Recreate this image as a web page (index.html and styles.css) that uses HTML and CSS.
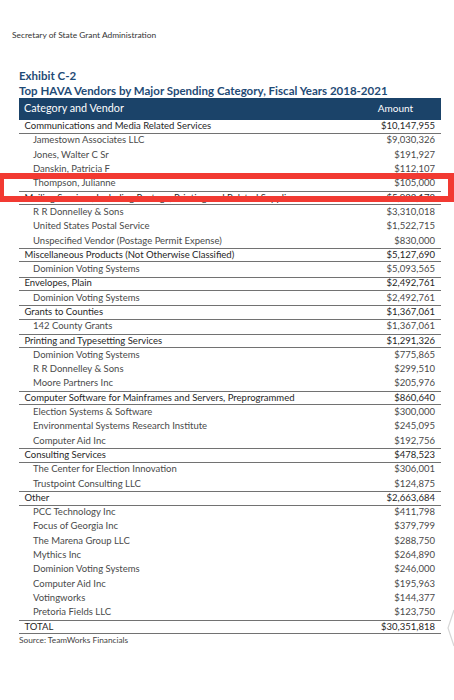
FILE: index.html
```html
<!DOCTYPE html>
<html>
<head>
<meta charset="utf-8">
<link rel="stylesheet" href="styles.css">
</head>
<body>
<div class="page">
  <div class="running-head">Secretary of State Grant Administration</div>
  <div class="exhibit">
    <div class="exhibit-no">Exhibit C-2</div>
    <div class="exhibit-title">Top HAVA Vendors by Major Spending Category, Fiscal Years 2018-2021</div>
    <div class="table">
      <div class="row head"><span class="name">Category and Vendor</span><span class="amt">Amount</span></div>
      <div class="row cat first"><span class="name">Communications and Media Related Services</span><span class="amt">$10,147,955</span></div>
      <div class="row sub"><span class="name">Jamestown Associates LLC</span><span class="amt">$9,030,326</span></div>
      <div class="row sub"><span class="name">Jones, Walter C Sr</span><span class="amt">$191,927</span></div>
      <div class="row sub"><span class="name">Danskin, Patricia F</span><span class="amt">$112,107</span></div>
      <div class="row sub"><span class="name">Thompson, Julianne</span><span class="amt">$105,000</span></div>
      <div class="row cat"><span class="name">Mailing Services, Including Postage, Printing and Related Supplies</span><span class="amt">$5,922,178</span></div>
      <div class="row sub"><span class="name">R R Donnelley &amp; Sons</span><span class="amt">$3,310,018</span></div>
      <div class="row sub"><span class="name">United States Postal Service</span><span class="amt">$1,522,715</span></div>
      <div class="row sub"><span class="name">Unspecified Vendor (Postage Permit Expense)</span><span class="amt">$830,000</span></div>
      <div class="row cat"><span class="name">Miscellaneous Products (Not Otherwise Classified)</span><span class="amt">$5,127,690</span></div>
      <div class="row sub"><span class="name">Dominion Voting Systems</span><span class="amt">$5,093,565</span></div>
      <div class="row cat"><span class="name">Envelopes, Plain</span><span class="amt">$2,492,761</span></div>
      <div class="row sub"><span class="name">Dominion Voting Systems</span><span class="amt">$2,492,761</span></div>
      <div class="row cat"><span class="name">Grants to Counties</span><span class="amt">$1,367,061</span></div>
      <div class="row sub"><span class="name">142 County Grants</span><span class="amt">$1,367,061</span></div>
      <div class="row cat"><span class="name">Printing and Typesetting Services</span><span class="amt">$1,291,326</span></div>
      <div class="row sub"><span class="name">Dominion Voting Systems</span><span class="amt">$775,865</span></div>
      <div class="row sub"><span class="name">R R Donnelley &amp; Sons</span><span class="amt">$299,510</span></div>
      <div class="row sub"><span class="name">Moore Partners Inc</span><span class="amt">$205,976</span></div>
      <div class="row cat"><span class="name">Computer Software for Mainframes and Servers, Preprogrammed</span><span class="amt">$860,640</span></div>
      <div class="row sub"><span class="name">Election Systems &amp; Software</span><span class="amt">$300,000</span></div>
      <div class="row sub"><span class="name">Environmental Systems Research Institute</span><span class="amt">$245,095</span></div>
      <div class="row sub"><span class="name">Computer Aid Inc</span><span class="amt">$192,756</span></div>
      <div class="row cat"><span class="name">Consulting Services</span><span class="amt">$478,523</span></div>
      <div class="row sub"><span class="name">The Center for Election Innovation</span><span class="amt">$306,001</span></div>
      <div class="row sub"><span class="name">Trustpoint Consulting LLC</span><span class="amt">$124,875</span></div>
      <div class="row cat"><span class="name">Other</span><span class="amt">$2,663,684</span></div>
      <div class="row sub"><span class="name">PCC Technology Inc</span><span class="amt">$411,798</span></div>
      <div class="row sub"><span class="name">Focus of Georgia Inc</span><span class="amt">$379,799</span></div>
      <div class="row sub"><span class="name">The Marena Group LLC</span><span class="amt">$288,750</span></div>
      <div class="row sub"><span class="name">Mythics Inc</span><span class="amt">$264,890</span></div>
      <div class="row sub"><span class="name">Dominion Voting Systems</span><span class="amt">$246,000</span></div>
      <div class="row sub"><span class="name">Computer Aid Inc</span><span class="amt">$195,963</span></div>
      <div class="row sub"><span class="name">Votingworks</span><span class="amt">$144,377</span></div>
      <div class="row sub"><span class="name">Pretoria Fields LLC</span><span class="amt">$123,750</span></div>
      <div class="row cat total"><span class="name">TOTAL</span><span class="amt">$30,351,818</span></div>
    </div>
    <div class="source">Source: TeamWorks Financials</div>
  </div>
  <div class="highlight"></div>
  <svg class="page-edge" width="8" height="40" viewBox="0 0 8 40"><polyline points="8,2 2,20 8,38" fill="none" stroke="#d6d6d6" stroke-width="1.2"/></svg>
</div>
</body>
</html>
```
FILE: styles.css
```css
html, body {
  margin: 0;
  padding: 0;
  background: #ffffff;
}
.page {
  position: relative;
  width: 454px;
  height: 700px;
  overflow: hidden;
  font-family: Lato, "Open Sans", sans-serif;
}
.running-head {
  padding: 30px 0 0 12px;
  font-size: 8.4px;
  line-height: 10px;
  color: #333;
}
.exhibit {
  margin: 28px 13px 0 19px;
}
.exhibit-no {
  font-size: 11.5px;
  line-height: 15px;
  font-weight: 700;
  color: #1f4b76;
}
.exhibit-title {
  font-size: 11.5px;
  line-height: 15px;
  font-weight: 700;
  color: #1f4b76;
}
.table {
  display: flex;
  flex-direction: column;
}
.row {
  display: grid;
  grid-template-columns: 1fr 91px;
  align-items: center;
  height: 14.31px;
  box-sizing: border-box;
  padding-bottom: 1px;
  font-size: 9.5px;
  line-height: 10px;
  color: #4a4a4a;
  white-space: nowrap;
}
.row .name {
  padding-left: 14px;
}
.row .amt {
  text-align: right;
  padding-right: 6px;
}
.row.head {
  height: 21.5px;
  padding-bottom: 1px;
  background: #1b4369;
  color: #ffffff;
  font-size: 10.8px;
}
.row.head .name {
  padding-left: 5px;
}
.row.head .amt {
  text-align: center;
  padding-right: 0;
  font-size: 10px;
}
.row.cat {
  color: #262626;
  border-top: 1px solid #727272;
  border-bottom: 1px solid #727272;
}
.row.cat.first {
  border-top: 0;
}
.row.cat .name {
  padding-left: 5.5px;
}
.source {
  font-size: 8.3px;
  line-height: 11px;
  color: #444;
  padding-top: 1px;
}
.highlight {
  position: absolute;
  left: -2px;
  top: 173px;
  width: 444px;
  height: 17px;
  border: 6px solid #f23a32;
}
.page-edge {
  position: absolute;
  right: 0;
  top: 608px;
}
```
